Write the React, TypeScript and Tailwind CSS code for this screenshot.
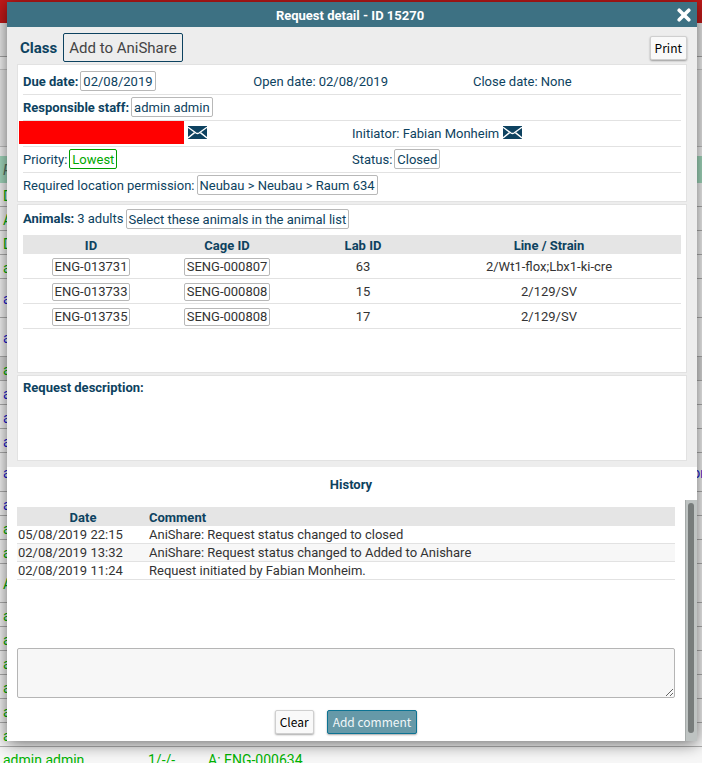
import React from "react";

type Row = { text: string; height: string; tone: string; fill?: string; end?: string };

const GREEN = "text-[#00b300]";
const BLUE = "text-[#1a1ad6]";

const listRows: Row[] = [
  { text: "D", height: "h-6", tone: GREEN },
  { text: "A", height: "h-6", tone: GREEN },
  { text: "D", height: "h-6", tone: GREEN },
  { text: "a", height: "h-6", tone: GREEN },
  { text: "a", height: "h-[39px]", tone: BLUE },
  { text: "a", height: "h-[39px]", tone: BLUE },
  { text: "a", height: "h-6", tone: GREEN, fill: "bg-[#dedede]" },
  { text: "a", height: "h-6", tone: BLUE },
  { text: "a", height: "h-6", tone: BLUE },
  { text: "a", height: "h-6", tone: BLUE },
  { text: "a", height: "h-[39px]", tone: BLUE, end: "on" },
  { text: "a", height: "h-6", tone: BLUE },
  { text: "a", height: "h-6", tone: GREEN },
  { text: "a", height: "h-6", tone: GREEN },
  { text: "A", height: "h-[39px]", tone: GREEN },
  { text: "a", height: "h-6", tone: GREEN },
  { text: "a", height: "h-6", tone: GREEN },
  { text: "a", height: "h-6", tone: GREEN },
  { text: "a", height: "h-6", tone: GREEN },
  { text: "a", height: "h-6", tone: GREEN },
  { text: "a", height: "h-6", tone: GREEN },
];

const animals = [
  { id: "ENG-013731", cage: "SENG-000807", lab: "63", line: "2/Wt1-flox;Lbx1-ki-cre" },
  { id: "ENG-013733", cage: "SENG-000808", lab: "15", line: "2/129/SV" },
  { id: "ENG-013735", cage: "SENG-000808", lab: "17", line: "2/129/SV" },
];

const history = [
  { date: "05/08/2019 22:15", comment: "AniShare: Request status changed to closed" },
  { date: "02/08/2019 13:32", comment: "AniShare: Request status changed to Added to Anishare" },
  { date: "02/08/2019 11:24", comment: "Request initiated by Fabian Monheim." },
];

function Chip({ children, tone = "border-[#b8b8b8]" }: { children: React.ReactNode; tone?: string }) {
  return (
    <button type="button" className={`mb-0.5 h-5 rounded-xs border px-0.5 pt-px leading-[17px] ${tone}`}>
      {children}
    </button>
  );
}

function SmallChip({ children }: { children: React.ReactNode }) {
  return (
    <button type="button" className="block h-[18px] rounded-xs border border-[#b8b8b8] px-0.5 leading-4">
      {children}
    </button>
  );
}

function Mail({ label }: { label: string }) {
  return (
    <button type="button" aria-label={label} className="mb-0.5">
      <svg viewBox="0 0 19 13" className="block h-[13px] w-[19px]">
        <rect width="19" height="13" fill="#0d4260" />
        <path d="M0 1.2 L8 7 Q9.5 8 11 7 L19 1.2" fill="none" stroke="#fff" strokeWidth="1.4" />
        <path d="M0 12 L6.6 6.6 M19 12 L12.4 6.6" fill="none" stroke="#fff" strokeWidth="1.4" />
      </svg>
    </button>
  );
}

function Line({ children }: { children: React.ReactNode }) {
  return (
    <div className="flex h-[26px] items-center border-b border-[#e2e2e2] last:border-transparent">{children}</div>
  );
}

function Background() {
  return (
    <div className="text-sm leading-4">
      <div className="h-[23px] bg-[#c41a1a]" />
      <div className="h-[34px] border-b border-[#a8a8a8] bg-[#ededed]" />
      <div className="h-[13px] border-b border-[#cccccc] bg-[#f7f7f7]" />
      <div className="h-[77px] border-b border-[#c4c4c4] bg-[#ededed]" />
      <div className="h-[9px]" />
      <div className="h-[27px] bg-[#a5dcc0] pt-1.5 pl-[3px] text-[#52705f] italic">P</div>
      {listRows.map((r, i) => (
        <div key={i} className={`flex items-center justify-between border-b border-[#b0b0b0] pt-0.5 pl-[3px] ${r.height} ${r.tone} ${r.fill ?? ""}`}>
          <span>{r.text}</span>
          {r.end && <span className="-mr-1.5">{r.end}</span>}
        </div>
      ))}
      <div className={`flex h-6 items-center pt-0.5 pl-[3px] ${GREEN}`}>
        <span className="w-[145px]">admin admin</span>
        <span className="w-[60px]">1/-/-</span>
        <span>A: ENG-000634</span>
      </div>
    </div>
  );
}

export default function App() {
  const card = "border border-[#e2e2e2] bg-white px-[5px]";
  const plainButton =
    "h-6 rounded-xs border border-[#cfcfcf] bg-[#f9f9f9] px-1 font-['Noto_Sans_CJK_SC',sans-serif] text-xs leading-[22px] text-black shadow-[0_1px_2px_rgba(0,0,0,0.35)]";
  return (
    <div className="relative h-screen overflow-hidden bg-[#f7f7f7] font-[Roboto,sans-serif]">
      <Background />
      <section
        role="dialog"
        aria-labelledby="dialog-title"
        className="absolute top-0.5 right-[5px] left-[7px] bg-white text-[13px] leading-4 text-[#0d4260] shadow-[0_2px_16px_rgba(0,0,0,0.6)]"
      >
        <header className="grid h-[25px] grid-cols-[1fr_auto_1fr] items-center bg-[#3d7183] px-1.5 text-white">
          <h1 id="dialog-title" className="col-start-2 pt-0.5 pr-1 font-bold">
            Request detail - ID 15270
          </h1>
          <button type="button" aria-label="Close" className="justify-self-end">
            <svg viewBox="0 0 14 14" className="block size-3.5">
              <path d="M2.2 2.2 L11.8 11.8 M11.8 2.2 L2.2 11.8" stroke="#fff" strokeWidth="3.6" strokeLinecap="round" />
            </svg>
          </button>
        </header>

        <div className="bg-[#ededed] px-2.5 pb-1.5">
          <div className="flex h-[37px] items-center pt-1 pl-[3px]">
            <h2 className="mr-1.5 text-[15px] font-bold">Class</h2>
            <button type="button" className="h-[29px] rounded-xs border border-[#0d4260] px-[5px] text-[15px] text-[#444444]">
              Add to AniShare
            </button>
            <button type="button" className={`${plainButton} ml-auto`}>
              Print
            </button>
          </div>

          <div className="flex flex-col gap-0.5">
            <div className={`${card} pt-1 pb-0.5`}>
              <Line>
                <div className="flex w-[35%] items-center gap-0.5">
                  <b>Due date:</b>
                  <Chip>02/08/2019</Chip>
                </div>
                <div className="flex-1">Open date: 02/08/2019</div>
                <div className="w-[208px]">Close date: None</div>
              </Line>
              <Line>
                <div className="flex items-center gap-0.5">
                  <b>Responsible staff:</b>
                  <Chip>admin admin</Chip>
                </div>
              </Line>
              <Line>
                <div className="-ml-1 flex w-1/2 items-center gap-1">
                  <div className="mb-0.5 h-[23px] w-[165px] bg-[#ff0000]" />
                  <Mail label="Mail to responsible staff" />
                </div>
                <div className="ml-1 flex items-center gap-1">
                  Initiator: Fabian Monheim
                  <Mail label="Mail to initiator" />
                </div>
              </Line>
              <Line>
                <div className="flex w-1/2 items-center gap-0.5">
                  Priority:
                  <Chip tone="border-[#00a000] text-[#00a800]">Lowest</Chip>
                </div>
                <div className="flex items-center gap-0.5">
                  Status:
                  <Chip>Closed</Chip>
                </div>
              </Line>
              <Line>
                <div className="flex items-center gap-0.5">
                  Required location permission:
                  <Chip>{"Neubau > Neubau > Raum 634"}</Chip>
                </div>
              </Line>
            </div>

            <div className={`${card} min-h-[169px] pt-1`}>
              <div className="flex items-start gap-0.5 pb-1.5">
                <b className="pt-0.5">Animals:</b>
                <span className="pt-0.5 pl-px">3 adults</span>
                <div className="-mb-0.5">
                  <Chip>Select these animals in the animal list</Chip>
                </div>
              </div>
              <table className="w-full table-fixed border-separate border-spacing-0 text-center">
                <thead>
                  <tr className="h-[19px] bg-[#e5e5e5]">
                    <th className="w-[136px] pt-0.5">ID</th>
                    <th className="w-[136px] pt-0.5">Cage ID</th>
                    <th className="w-[136px] pt-0.5">Lab ID</th>
                    <th className="pt-0.5 pr-3.5">Line / Strain</th>
                  </tr>
                </thead>
                <tbody className="text-[#333333] [&_td]:h-[25px] [&_td]:border-b [&_td]:border-[#e2e2e2] [&_td]:pt-0.5">
                  {animals.map((a) => (
                    <tr key={a.id}>
                      <td>
                        <div className="flex justify-center">
                          <SmallChip>{a.id}</SmallChip>
                        </div>
                      </td>
                      <td>
                        <div className="flex justify-center">
                          <SmallChip>{a.cage}</SmallChip>
                        </div>
                      </td>
                      <td>{a.lab}</td>
                      <td className="pr-3.5">{a.line}</td>
                    </tr>
                  ))}
                </tbody>
              </table>
            </div>

            <div className={`${card} min-h-[86px] pt-1`}>
              <b>Request description:</b>
            </div>
          </div>
        </div>

        <h2 className="h-[33px] pt-2.5 pr-0.5 text-center font-bold">History</h2>

        <div className="flex">
          <div className="flex-1 px-2.5 pt-[7px] pb-[7px]">
            <div className="min-h-[141px]">
              <table className="w-full table-fixed border-separate border-spacing-0 text-left">
                <thead>
                  <tr className="h-[19px] bg-[#e5e5e5]">
                    <th className="w-[132px] pt-0.5 text-center">Date</th>
                    <th className="pt-0.5">Comment</th>
                  </tr>
                </thead>
                <tbody className="text-[#333333] [&_td]:h-[18px] [&_td]:border-b [&_td]:border-[#e2e2e2] [&_td]:pt-px">
                  {history.map((h) => (
                    <tr key={h.date} className="even:bg-[#f7f7f7]">
                      <td className="pl-px">{h.date}</td>
                      <td>{h.comment}</td>
                    </tr>
                  ))}
                </tbody>
              </table>
            </div>
            <textarea
              aria-label="Comment"
              className="block h-[50px] w-full resize rounded-xs border border-[#b5b5b5] bg-[#f7f7f7] p-1"
            />
            <div className="flex justify-center gap-[13px] pt-3">
              <button type="button" className={plainButton}>
                Clear
              </button>
              <button
                type="button"
                className="h-6 rounded-xs border border-[#0d7393] bg-[#6699a8] px-[5px] font-['Noto_Sans_CJK_SC',sans-serif] text-xs leading-[22px] text-[#f0f6f8] shadow-[0_1px_2px_rgba(0,0,0,0.35)]"
              >
                Add comment
              </button>
            </div>
          </div>
          <div aria-hidden="true" className="flex w-3 border-l border-[#a5aaa9] bg-[#bec3c2] px-0.5 pt-[3px] pb-2">
            <div className="w-1.5 rounded-full bg-[#777c7b]" />
          </div>
        </div>
      </section>
    </div>
  );
}
